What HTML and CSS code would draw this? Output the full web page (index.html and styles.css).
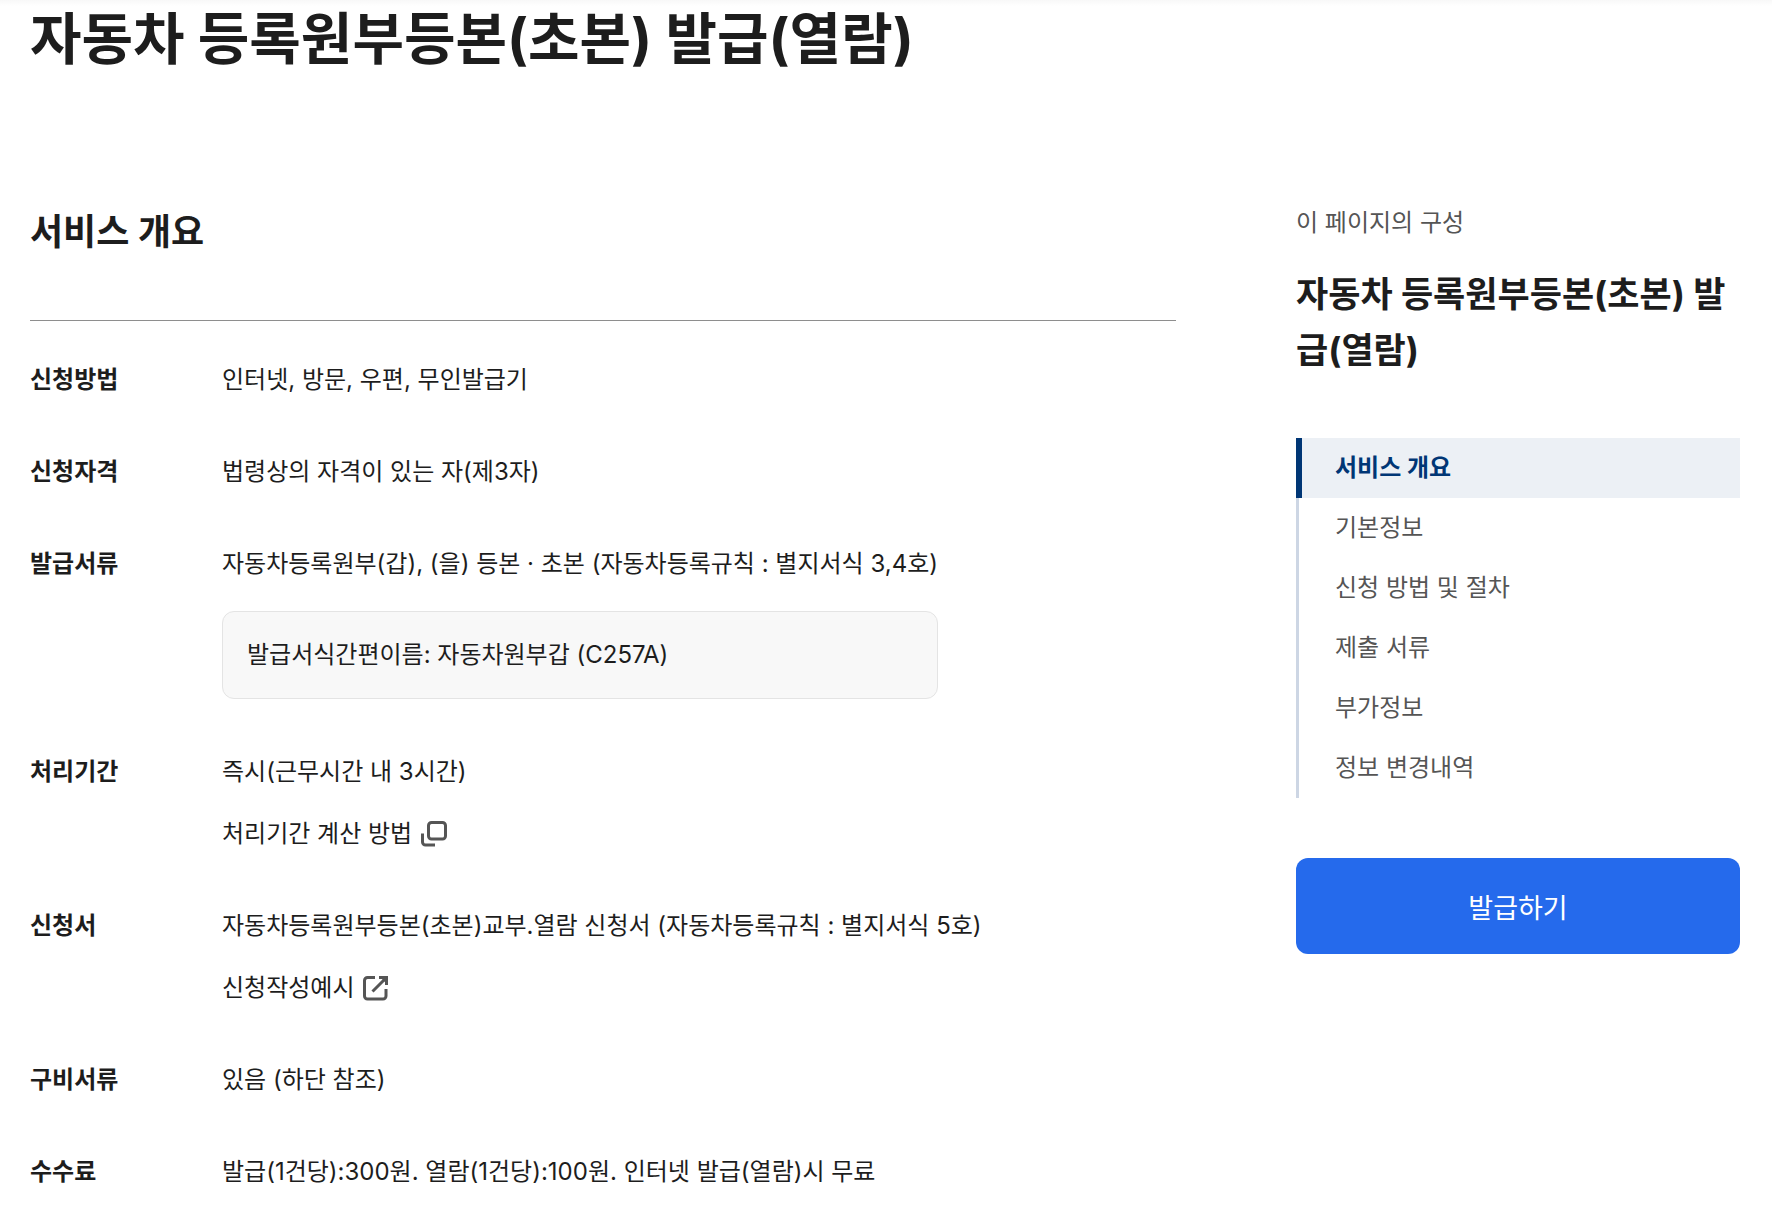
FILE: index.html
```html
<!DOCTYPE html>
<html lang="ko">
<head>
  <meta charset="utf-8">
  <meta name="viewport" content="width=device-width, initial-scale=1">
  <title>자동차 등록원부등본(초본) 발급(열람)</title>
  <link rel="stylesheet" href="styles.css">
</head>
<body>
  <div class="page">
    <h1 class="page-title">자동차 등록원부등본(초본) 발급(열람)</h1>

    <div class="columns">
      <main class="content">
        <h2 class="section-title" id="summary">서비스 개요</h2>

        <dl class="info">
          <dt>신청방법</dt>
          <dd>인터넷, 방문, 우편, 무인발급기</dd>

          <dt>신청자격</dt>
          <dd>법령상의 자격이 있는 자(제3자)</dd>

          <dt>발급서류</dt>
          <dd>
            <div class="doc">
              <p>자동차등록원부(갑), (을) 등본 · 초본 (자동차등록규칙 : 별지서식 3,4호)</p>
              <p class="doc-box">발급서식간편이름: 자동차원부갑 (C257A)</p>
            </div>
          </dd>

          <dt>처리기간</dt>
          <dd>
            <p>즉시(근무시간 내 3시간)</p>
            <button type="button" class="link">
              처리기간 계산 방법
              <svg class="icon" viewBox="0 0 30 30" aria-hidden="true">
                <rect x="9.5" y="3.5" width="17" height="16.5" rx="3"/>
                <path d="M3.5 14.5V23a3 3 0 0 0 3 3H16"/>
              </svg>
            </button>
          </dd>

          <dt>신청서</dt>
          <dd>
            <p>자동차등록원부등본(초본)교부.열람 신청서 (자동차등록규칙 : 별지서식 5호)</p>
            <a class="link" href="#">
              신청작성예시
              <svg class="icon" viewBox="0 0 30 30" aria-hidden="true">
                <path d="M14 4.500H6.500a3 3 0 0 0-3 3V23a3 3 0 0 0 3 3H22a3 3 0 0 0 3-3v-7"/>
                <path d="M11.500 18.500L24.500 5.500M18 4.500h7.500V12"/>
                <path class="fill" d="M19 4h7v7z"/>
              </svg>
            </a>
          </dd>

          <dt>구비서류</dt>
          <dd>있음 (하단 참조)</dd>

          <dt>수수료</dt>
          <dd>발급(1건당):300원. 열람(1건당):100원. 인터넷 발급(열람)시 무료</dd>
        </dl>
      </main>

      <aside class="side">
        <p class="side-label">이 페이지의 구성</p>
        <h2 class="side-title">자동차 등록원부등본(초본) 발급(열람)</h2>
        <nav class="side-nav">
          <a class="active" href="#summary">서비스 개요</a>
          <a href="#">기본정보</a>
          <a href="#">신청 방법 및 절차</a>
          <a href="#">제출 서류</a>
          <a href="#">부가정보</a>
          <a href="#">정보 변경내역</a>
        </nav>
        <button type="button" class="btn-issue">발급하기</button>
      </aside>
    </div>
  </div>
</body>
</html>
```
FILE: styles.css
```css
* {
  box-sizing: border-box;
}

body {
  margin: 0;
  background: linear-gradient(#f8f8f8, #fff 6px) no-repeat #fff;
  color: #1d1d1d;
  font-family: Inter, "Noto Sans CJK KR", sans-serif;
  font-size: 24px;
  line-height: 38px;
}

h1, h2, p, dl, dd {
  margin: 0;
}

.page {
  padding: 0 32px 16px 30px;
}

.page-title {
  font-size: 56px;
  line-height: 78px;
}

.columns {
  display: grid;
  grid-template-columns: minmax(0, 1fr) 444px;
  gap: 120px;
  align-items: start;
  padding-top: 126px;
}

/* service summary */
.section-title {
  padding-bottom: 60px;
  border-bottom: 1px solid #8e8e8e;
  font-size: 36px;
  line-height: 56px;
}

.info {
  display: grid;
  grid-template-columns: 192px minmax(0, 1fr);
  row-gap: 54px;
  padding-top: 40px;
}

.info dt {
  font-weight: 700;
}

.doc {
  width: fit-content;
}

.doc-box {
  margin-top: 28px;
  padding: 24px;
  border: 1px solid #e4e4e4;
  border-radius: 12px;
  background: #f8f8f8;
}

.link {
  display: flex;
  align-items: center;
  gap: 7px;
  width: fit-content;
  margin-top: 24px;
  padding: 0;
  border: 0;
  background: none;
  color: inherit;
  font: inherit;
  text-decoration: none;
}

.icon {
  width: 30px;
  height: 30px;
  fill: none;
  stroke: #555;
  stroke-width: 3;
}

.icon .fill {
  fill: #555;
  stroke: none;
}

/* page contents */
.side-label {
  color: #555;
}

.side-title {
  margin-top: 24px;
  font-size: 35px;
  line-height: 56px;
  word-break: break-all;
}

.side-nav {
  margin-top: 60px;
  background: linear-gradient(#cdd6e4, #cdd6e4) left / 3px 100% no-repeat;
}

.side-nav a {
  display: block;
  padding: 0 39px;
  color: #555;
  line-height: 60px;
  text-decoration: none;
}

.side-nav .active {
  padding-left: 33px;
  border-left: 6px solid #003675;
  background: #ecf0f5;
  color: #003675;
  font-weight: 700;
}

.btn-issue {
  width: 100%;
  height: 96px;
  margin-top: 60px;
  border: 0;
  border-radius: 12px;
  background: #256aec;
  color: #fff;
  font-family: inherit;
  font-size: 27px;
}
```
